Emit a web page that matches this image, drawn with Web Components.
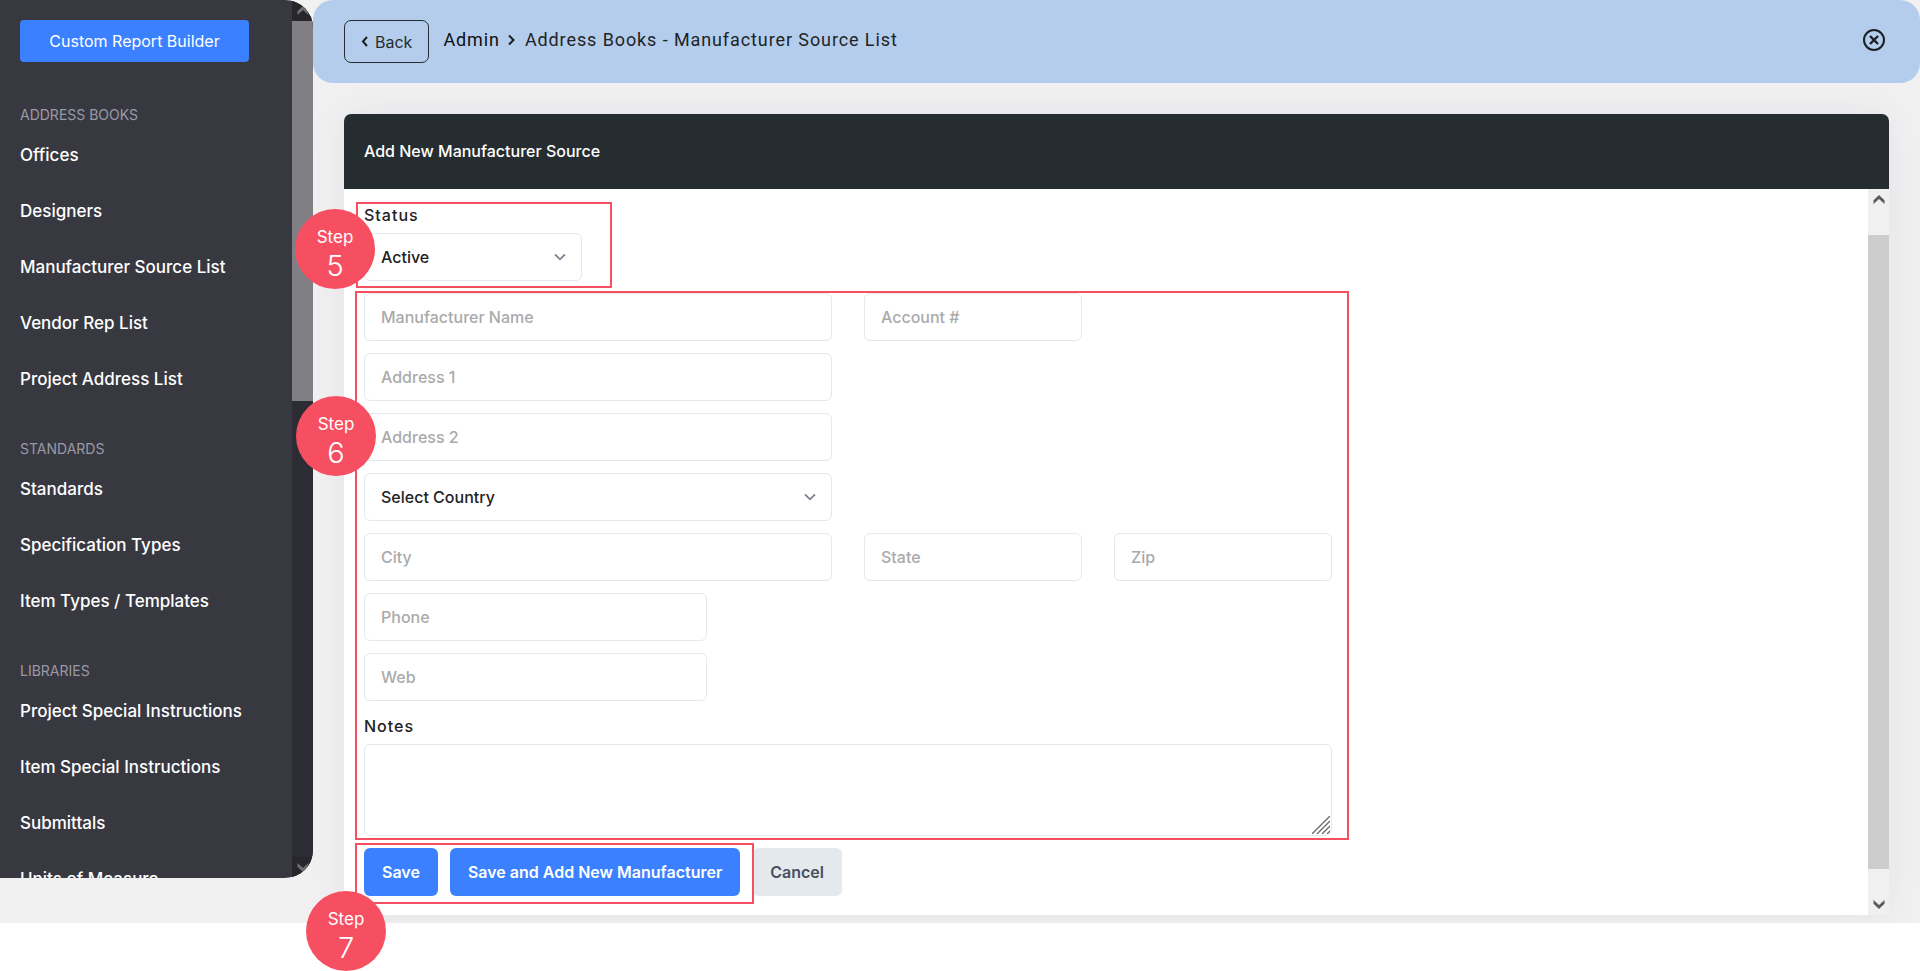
<!DOCTYPE html>
<html lang="en">
<head>
<meta charset="utf-8">
<title>Add New Manufacturer Source</title>
<style>
  body { margin: 0; background: #fff; font: 500 16px/22px Inter, "Liberation Sans", sans-serif; color: #1f2224; }
</style>
</head>
<body>
<app-shell>
  <app-sidebar slot="sidebar">
    <nav-group heading="Address Books">
      <nav-link>Offices</nav-link>
      <nav-link>Designers</nav-link>
      <nav-link>Manufacturer Source List</nav-link>
      <nav-link>Vendor Rep List</nav-link>
      <nav-link>Project Address List</nav-link>
    </nav-group>
    <nav-group heading="Standards">
      <nav-link>Standards</nav-link>
      <nav-link>Specification Types</nav-link>
      <nav-link>Item Types / Templates</nav-link>
    </nav-group>
    <nav-group heading="Libraries">
      <nav-link>Project Special Instructions</nav-link>
      <nav-link>Item Special Instructions</nav-link>
      <nav-link>Submittals</nav-link>
      <nav-link>Units of Measure</nav-link>
    </nav-group>
  </app-sidebar>
  <top-bar section="Admin">Address Books - Manufacturer Source List</top-bar>
  <form-card heading="Add New Manufacturer Source">
    <step-callout step="5" class="status"><select-field label="Status" value="Active"></select-field></step-callout>
    <step-callout step="6" class="details">
      <field-grid>
        <text-field label="Manufacturer Name"></text-field>
        <text-field label="Account #"></text-field>
        <text-field label="Address 1" class="own-row"></text-field>
        <text-field label="Address 2" class="own-row"></text-field>
        <select-field value="Select Country" class="own-row"></select-field>
        <text-field label="City" class="own-row"></text-field>
        <text-field label="State"></text-field>
        <text-field label="Zip"></text-field>
        <text-field label="Phone" class="own-row short"></text-field>
        <text-field label="Web" class="own-row short"></text-field>
        <notes-field label="Notes"></notes-field>
      </field-grid>
    </step-callout>
    <action-row>
      <step-callout step="7" class="save">
        <action-row>
          <ui-button>Save</ui-button>
          <ui-button>Save and Add New Manufacturer</ui-button>
        </action-row>
      </step-callout>
      <ui-button class="quiet">Cancel</ui-button>
    </action-row>
  </form-card>
</app-shell>

<script>
const define = (name, render) => customElements.define(name, class extends HTMLElement {
  connectedCallback() {
    if (this.shadowRoot) return;
    const root = this.attachShadow({ mode: 'open' });
    const tpl = document.createElement('template');
    tpl.innerHTML = '<style>*{box-sizing:border-box}:host{box-sizing:border-box}</style>' + render(this);
    root.append(tpl.content.cloneNode(true));
  }
});
const attr = (el, name) => el.getAttribute(name) || '';

define('app-shell', () => `
  <style>
    :host { display: block; }
    .app { display: flex; background: #f1f1f2; }
    main { flex: 1; min-width: 0; padding-bottom: 8px; }
    ::slotted(form-card) { margin: 31px 31px 0; }
    footer { position: relative; z-index: 1; height: 48px; background: #fff; }
  </style>
  <div class="app"><slot name="sidebar"></slot><main><slot></slot></main></div>
  <footer></footer>`);

define('app-sidebar', () => `
  <style>
    :host { display: flex; flex: none; width: 313px; margin-bottom: 45px; contain: size; position: relative; z-index: 1;
      background: #383841; border-radius: 0 28px 28px 0; overflow: hidden; }
    .scroll { flex: 1; overflow: hidden; padding: 20px 43px 0 20px; }
    button { display: block; width: 100%; height: 42px; border: 0; border-radius: 4px; background: #3b81ff; color: #fff;
      font: 400 16px/22px Inter, sans-serif; margin-bottom: 42px; }
    scroll-track { --track: #2c2c35; --thumb: #807f84; --cap: #27272b; --arrow: #707074; --thumb-grow: 380; --rest-grow: 456; }
  </style>
  <div class="scroll"><button type="button">Custom Report Builder</button><nav><slot></slot></nav></div>
  <scroll-track></scroll-track>`);

define('nav-group', el => `
  <style>
    :host { display: block; margin-bottom: 31px; }
    h2 { margin: 0 0 1px; font-size: 14px; line-height: 22px; font-weight: 400; text-transform: uppercase; color: #9a9aa6; }
  </style>
  <h2>${attr(el, 'heading')}</h2><slot></slot>`);

define('nav-link', () => `
  <style>
    :host { display: block; }
    a { display: block; line-height: 56px; font-size: 17px; color: #fff; text-decoration: none; white-space: nowrap; }
  </style>
  <a href="#"><slot></slot></a>`);

define('scroll-track', () => `
  <style>
    :host { display: flex; flex-direction: column; flex: none; width: 21px; background: var(--track); }
    .cap { flex: none; height: 21px; display: grid; place-items: center; background: var(--cap); }
    .lead { flex: var(--lead-grow, 0) 0 0; }
    .thumb { flex: var(--thumb-grow) 0 0; background: var(--thumb); }
    .rest { flex: var(--rest-grow) 0 0; }
    svg { fill: var(--arrow); }
  </style>
  <div class="cap"><svg width="12" height="9" viewBox="0 0 12 9"><path d="M6 0l5.500 5.200V9L6 4 .5 9V5.200z"/></svg></div>
  <div class="lead"></div><div class="thumb"></div><div class="rest"></div>
  <div class="cap"><svg width="12" height="9" viewBox="0 0 12 9"><path d="M6 9L.5 3.800V0L6 5l5.500-5v3.800z"/></svg></div>`);

define('top-bar', el => `
  <style>
    :host { display: flex; align-items: flex-start; gap: 14px; height: 83px; padding: 20px 34px 0 31px; position: relative; z-index: 1;
      border-radius: 20px; background: #b4cdec; font-family: Roboto, sans-serif; font-size: 18px; font-weight: 400; letter-spacing: .05em; }
    button { background: none; color: #262d30; font: 400 16px/22px Inter, sans-serif; }
    .back { display: flex; align-items: center; gap: 7px; height: 43px; padding: 0 16px; border: 1px solid #262d30; border-radius: 7px; }
    .crumbs { display: flex; align-items: center; gap: 8px; height: 40px; flex: 1; white-space: nowrap; color: #1e2426; }
    .crumbs a { color: #0d1012; text-decoration: none; }
    .crumbs svg { margin-right: 2px; }
    .close { display: grid; place-items: center; width: 24px; height: 40px; padding: 0; border: 0; }
    svg { display: block; fill: none; stroke: #1a1f21; }
  </style>
  <button type="button" class="back"><svg width="7" height="11" viewBox="0 0 7 11" stroke-width="2"><path d="M6 1L2 5.500l4 4.500"/></svg>Back</button>
  <nav class="crumbs"><a href="#">${attr(el, 'section')}</a><svg width="7" height="12" viewBox="0 0 7 12" stroke-width="2"><path d="M1 1.500L5.500 6 1 10.500"/></svg><span><slot></slot></span></nav>
  <button type="button" class="close" aria-label="Close"><svg width="22" height="22" viewBox="0 0 22 22" stroke-width="2"><circle cx="11" cy="11" r="10"/><path d="M7 7l8 8M15 7l-8 8" stroke-width="2.400"/></svg></button>`);

define('form-card', el => `
  <style>
    :host { display: block; border-radius: 7px 7px 0 0; background: #fff; box-shadow: 0 0 40px rgba(60, 60, 90, .08); }
    h1 { margin: 0; padding: 0 20px; line-height: 75px; font-size: 16px; font-weight: 500; color: #fff; background: #262d30; border-radius: 7px 7px 0 0; }
    .body { display: flex; }
    form { flex: 1; min-width: 0; display: flex; flex-direction: column; align-items: flex-start; gap: 12px; padding: 15px 20px 19px; }
    scroll-track { --track: #f0f0f0; --thumb: #cdcdcd; --cap: #f0f0f0; --arrow: #5c5c5c; --lead-grow: 25; --thumb-grow: 634; --rest-grow: 25; }
    ::slotted(.status) { width: 218px; --inset: -2px -30px -7px -8px; --badge-left: -69px; --badge-top: 5px; }
    ::slotted(.details) { width: 100%; max-width: 968px; --inset: -2px -17px -4px -9px; --badge-left: -68px; --badge-top: 103px; }
  </style>
  <h1>${attr(el, 'heading')}</h1>
  <div class="body"><form><slot></slot></form><scroll-track></scroll-track></div>`);

define('step-callout', el => `
  <style>
    :host { display: block; position: relative; }
    .frame { position: absolute; z-index: 2; inset: var(--inset); border: 2px solid #f74f62; pointer-events: none; }
    .badge { position: absolute; z-index: 3; left: var(--badge-left); top: var(--badge-top); width: 80px; height: 80px; padding-top: 18px;
      border-radius: 50%; background: #f74f62; color: #fff; text-align: center; font-size: 17px; line-height: 20px; font-weight: 400; }
    .badge b { display: block; margin-top: 3px; font-size: 29px; line-height: 32px; font-weight: 300; }
  </style>
  <slot></slot><div class="frame"></div><div class="badge">Step<b>${attr(el, 'step')}</b></div>`);

define('field-grid', () => `
  <style>
    :host { display: grid; grid-template-columns: 468fr 218fr 218fr; gap: 12px 32px; }
    ::slotted(.own-row) { grid-column: 1; }
    ::slotted(.short) { margin-right: 125px; }
    ::slotted(notes-field) { grid-column: 1 / -1; padding-top: 2px; }
  </style><slot></slot>`);

const fieldCss = `
  :host { display: block; min-width: 0; }
  label { display: block; margin-bottom: 7px; letter-spacing: 1px; }
  input, select, textarea { display: block; width: 100%; height: 48px; margin: 0; padding: 0 16px; border: 1px solid #e4e9ed; border-radius: 6px;
    background: #fff; color: #1f2224; font: inherit; appearance: none; outline: 0; }
  ::placeholder { color: #aaa; opacity: 1; }
  .box { position: relative; }
  svg { position: absolute; pointer-events: none; fill: none; }`;

define('text-field', el => `
  <style>${fieldCss}</style>
  <input type="text" aria-label="${attr(el, 'label')}" placeholder="${attr(el, 'label')}">`);

define('select-field', el => `
  <style>${fieldCss} svg { right: 16px; top: 20px; stroke: #7e7b90; stroke-width: 1.700; }</style>
  ${attr(el, 'label') ? `<label for="s">${attr(el, 'label')}</label>` : ''}
  <div class="box"><select id="s" ${attr(el, 'label') ? '' : 'aria-label="Country"'}><option>${attr(el, 'value')}</option></select>
  <svg width="12" height="8" viewBox="0 0 12 8"><path d="M1 1.300l5 5 5-5"/></svg></div>`);

define('notes-field', el => `
  <style>${fieldCss} textarea { height: 92px; padding: 12px 16px; resize: none; } svg { right: 2px; bottom: 2px; stroke: #66666a; stroke-width: 1.300; }</style>
  <label for="n">${attr(el, 'label')}</label>
  <div class="box"><textarea id="n"></textarea>
  <svg width="18" height="18" viewBox="0 0 18 18"><path d="M0 18L18 0M5 18L18 5M10 18l8-8M15 18l3-3"/></svg></div>`);

define('action-row', () => `
  <style>
    :host { display: flex; gap: 12px; }
    ::slotted(.save) { --inset: -5px -14px -8px -9px; --badge-left: -58px; --badge-top: 43px; }
  </style><slot></slot>`);

define('ui-button', () => `
  <style>
    :host { display: block; }
    button { display: block; height: 48px; padding: 0 18px; border: 0; border-radius: 6px; background: #3b81ff; color: #fff; font: inherit; font-weight: 600; white-space: nowrap; }
    :host(.quiet) button { background: #e4e9ed; color: #4a4f60; }
  </style>
  <button type="button"><slot></slot></button>`);
</script>
</body>
</html>
